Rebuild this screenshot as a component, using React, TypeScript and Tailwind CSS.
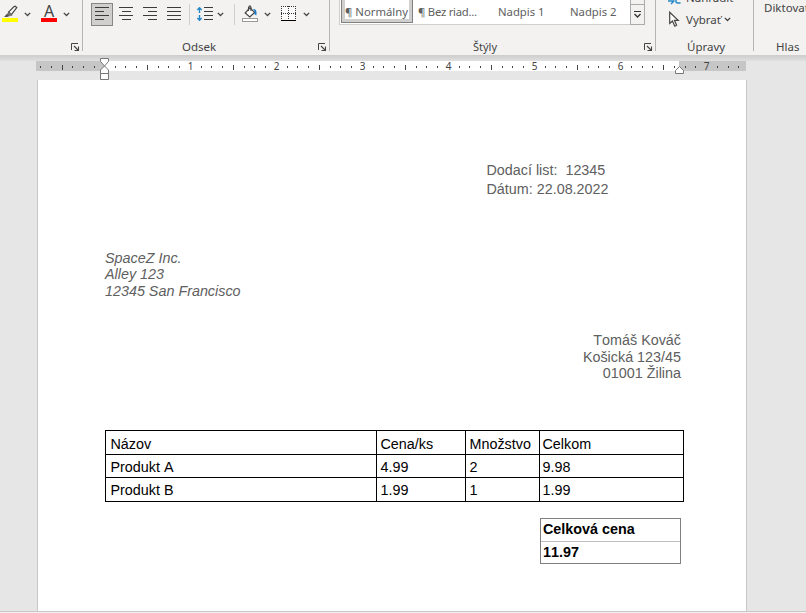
import React from 'react';

function Chevron({ className = '' }: { className?: string }) {
  return (
    <svg width="7" height="5" viewBox="0 0 7 5" className={`shrink-0 ${className}`}>
      <path d="M0.8 0.9 L3.5 3.5 L6.2 0.9" fill="none" stroke="#444" strokeWidth="1.3" />
    </svg>
  );
}

function Launcher({ className = '' }: { className?: string }) {
  return (
    <svg width="9" height="9" viewBox="0 0 9 9" className={`absolute top-[43px] ${className}`}>
      <path d="M0.5 7 V0.5 H7" fill="none" stroke="#444" />
      <path d="M3 3 L7 7 M7.5 3.5 V7.5 H3.5" fill="none" stroke="#444" strokeWidth="1.1" />
    </svg>
  );
}

function AlignIcon({ lines }: { lines: [number, number][] }) {
  return (
    <svg width="14" height="14" viewBox="0 0 14 14" className="shrink-0" shapeRendering="crispEdges">
      {lines.map(([x, w], i) => (
        <rect key={i} x={x} y={i * 4} width={w} height="1" fill="#3b3b3b" />
      ))}
    </svg>
  );
}

function Group({ className = '', children, label, labelClass = '' }: {
  className?: string; children?: React.ReactNode; label?: string; labelClass?: string;
}) {
  return (
    <section className={`relative flex h-[55px] shrink-0 flex-col ${className}`}>
      <div className="flex h-[38px] items-start">{children}</div>
      <div className={`h-[17px] text-[11.5px] leading-[18px] whitespace-nowrap ${labelClass}`}>{label}</div>
    </section>
  );
}

function Divider() {
  return <div className="h-[51px] w-px shrink-0 bg-[#b5b4b3]" />;
}

function Ribbon() {
  return (
    <header className="flex h-[55px] overflow-hidden bg-[#f3f2f1] font-['Noto_Sans','Open_Sans',sans-serif] text-[#444]">
      <Group className="w-[82px]">
        <svg width="17" height="17" viewBox="0 0 17 17" className="mt-[5px] ml-[2px]">
          <rect x="0" y="13" width="16" height="4" fill="#ff0" />
          <path d="M13.2 1.2 L14.8 2.6 L9.3 9.6 L6.6 7.2 L11.8 1.8 Z" fill="#fafafa" stroke="#444" strokeWidth="1.2" />
          <path d="M6.5 6.5 L10.2 10 L7.5 10.8 L5.8 9.5 Z" fill="#777" stroke="#555" strokeWidth="0.6" />
          <path d="M5.2 8.6 L7.5 10.9 L5.3 12 L2 12 Z" fill="#555" />
        </svg>
        <Chevron className="mt-[12px] ml-[5px]" />
        <div className="mt-[2px] ml-[10px] flex w-4 flex-col items-center">
          <span className="h-4 text-[16px] leading-[19px] font-normal">A</span>
          <span className="h-1 w-4 bg-[#f00]" />
        </div>
        <Chevron className="mt-[12px] ml-[6px]" />
        <Launcher className="left-[71px]" />
      </Group>
      <Divider />
      <Group className="w-[246px]" label="Odsek" labelClass="pl-[99px] text-[11.4px]">
        <div className="mt-[3px] ml-[8px] flex h-[23px] w-[22px] shrink-0 border border-[#878685] bg-[#d0cfce] pt-[3px] pl-[3px]">
          <AlignIcon lines={[[0, 14], [0, 9], [0, 14], [0, 9]]} />
        </div>
        <div className="mt-[7px] ml-[6px] flex gap-[10px]">
          <AlignIcon lines={[[0, 14], [3, 9], [0, 14], [3, 9]]} />
          <AlignIcon lines={[[0, 14], [5, 9], [0, 14], [5, 9]]} />
          <AlignIcon lines={[[0, 14], [0, 14], [0, 14], [0, 14]]} />
        </div>
        <div className="mt-[4px] ml-[8px] h-[21px] w-px bg-[#d0cfce]" />
        <svg width="17" height="15" viewBox="0 0 17 15" className="mt-[7px] ml-[7px]">
          <path d="M2.5 0.5 V6 M0.3 2.9 L2.5 0.7 L4.7 2.9 M2.5 8 V13.5 M0.3 11.1 L2.5 13.3 L4.7 11.1" fill="none" stroke="#2488c8" strokeWidth="1.4" />
          <path d="M7 0.5 H16 M7 4.5 H16 M7 8.5 H16 M7 12.5 H16" stroke="#3b3b3b" />
        </svg>
        <Chevron className="mt-[12px] ml-[3px]" />
        <div className="mt-[4px] ml-[10px] h-[21px] w-px bg-[#d0cfce]" />
        <svg width="17" height="17" viewBox="0 0 17 17" className="mt-[5px] ml-[7px]">
          <path d="M7.8 2.8 L12.6 7.4 L7.8 12 L3.2 8 Z" fill="#fff" stroke="#444" strokeWidth="1.2" />
          <path d="M6.5 6 V2.5 Q8 -0.8 9 2.5 V6" fill="none" stroke="#444" strokeWidth="1.1" />
          <path d="M11 4 Q15.5 4 14.3 10.5 L12.3 9 Q13.5 6.5 11 4 Z" fill="#1979ca" />
          <rect x="0.5" y="13.5" width="15" height="3" fill="#fff" stroke="#999" />
        </svg>
        <Chevron className="mt-[12px] ml-[5px]" />
        <svg width="16" height="16" viewBox="0 0 16 16" className="mt-[5px] ml-[10px]">
          <rect x="0" y="1" width="15" height="14" fill="#fafafa" />
          <path d="M0 1.5 H15 M0 8.5 H15" stroke="#333" strokeDasharray="1 1" />
          <path d="M0.5 1 V14 M7.5 1 V14 M14.5 1 V14" stroke="#333" strokeDasharray="1 1" />
          <path d="M0 15.5 H15" stroke="#000" />
        </svg>
        <Chevron className="mt-[12px] ml-[6px]" />
        <Launcher className="left-[235px]" />
      </Group>
      <Divider />
      <Group className="w-[325px]" label="Štýly" labelClass="pl-[143px] text-[11px]">
        <div className="ml-[9px] flex h-[25px] w-[291px] shrink-0 border-b border-l border-[#cfcecd] bg-white text-[#606060]">
          <div className="ml-px h-[23px] w-[72px] shrink-0 border border-t-0 border-[#808180] bg-[#d0cfce] px-[3px] pb-[3px]">
            <div className="h-[19px] bg-white text-[11.3px] leading-[24px] whitespace-nowrap">¶ Normálny</div>
          </div>
          <span className="mt-[3px] ml-[5px] w-[80px] shrink-0 text-[11.3px] leading-[18px] tracking-[-0.25px] whitespace-nowrap">¶ Bez riad...</span>
          <span className="mt-[3px] w-[72px] shrink-0 text-[11.3px] leading-[18px] whitespace-nowrap">Nadpis 1</span>
          <span className="mt-[3px] w-[60px] shrink-0 text-[11.3px] leading-[18px] whitespace-nowrap">Nadpis 2</span>
        </div>
        <div className="flex h-[25px] w-[15px] shrink-0 flex-col border border-t-0 border-[#acabaa] bg-[#f3f2f1]">
          <div className="h-[5px] shrink-0 border-b border-[#acabaa]" />
          <svg width="13" height="17" viewBox="0 0 13 17" className="shrink-0">
            <path d="M3 6.5 H10" stroke="#333" />
            <path d="M3.5 9 L6.5 12 L9.5 9" fill="none" stroke="#333" strokeWidth="1.3" />
          </svg>
        </div>
        <Launcher className="left-[314px]" />
      </Group>
      <Divider />
      <Group className="w-[97px]" label="Úpravy" labelClass="pl-[31px] text-[11.1px]">
        <div className="flex flex-col">
          <div className="flex h-[10px]">
            <svg width="14" height="5" viewBox="0 0 14 5" className="ml-[12px]">
              <path d="M0 1 H6 M3 4 L6.5 0.5 M8 0 V1.5 Q8 3 10 3 H12.5" fill="none" stroke="#2488c8" strokeWidth="1.4" />
            </svg>
            <span className="-mt-[11px] ml-[4px] text-[11.5px] leading-[17px]">Nahradiť</span>
          </div>
          <div className="flex h-[20px]">
            <svg width="12" height="17" viewBox="0 0 12 17" className="mt-[1px] ml-[13px]">
              <path d="M0.7 1.2 V12.5 L3.5 10 L5.8 15.2 L7.6 14.2 L5.5 9.3 H9.2 Z" fill="#fff" stroke="#444" strokeWidth="1.2" />
            </svg>
            <span className="ml-[5px] w-[36px] text-[11.5px] leading-[20px]">Vybrať</span>
            <Chevron className="mt-[7px] ml-[2px]" />
          </div>
        </div>
      </Group>
      <Divider />
      <Group className="w-[52px]" label="Hlas" labelClass="pl-[22px] text-[11.2px]">
        <span className="ml-[10px] text-[11.5px] leading-[16px] whitespace-nowrap">Diktovať</span>
      </Group>
    </header>
  );
}

function Ruler() {
  const ticks = Array.from({ length: 66 }, (_, i) => i - 6).filter((i) => i !== 0 && i < 60);
  return (
    <svg width="806" height="25" viewBox="0 0 806 25" className="block shrink-0">
      <defs>
        <linearGradient id="edge" x1="0" y1="0" x2="0" y2="1">
          <stop offset="0" stopColor="#cdcccb" />
          <stop offset="1" stopColor="#e0e0e0" />
        </linearGradient>
      </defs>
      <rect x="0" y="0" width="806" height="6" fill="url(#edge)" />
      <rect x="36" y="6" width="710" height="10" fill="#fff" />
      <rect x="36" y="6" width="68" height="10" fill="#c6c6c6" />
      <rect x="679" y="6" width="67" height="10" fill="#c6c6c6" />
      {ticks.map((i) => {
        const x = Math.floor((i < 0 ? 105.25 : 104.25) + i * 10.755);
        if (i % 8 === 0) {
          return (
            <text key={i} x={x + 0.5} y="15" textAnchor="middle" fill="#444" className="font-['Noto_Sans',sans-serif] text-[10px]">
              {i / 8}
            </text>
          );
        }
        return i % 4 === 0
          ? <rect key={i} x={x} y="10" width="1" height="5" fill="#444" />
          : <rect key={i} x={x} y="11" width="1" height="2" fill="#444" />;
      })}
      <path d="M100.5 3.5 H108.5 V6.5 L104.5 11 L100.5 6.5 Z" fill="#fff" stroke="#777" />
      <path d="M104.5 11 L108.5 15 V24.5 H100.5 V15 Z M100.5 18.5 H108.5" fill="#fff" stroke="#777" />
      <path d="M679.5 11.5 L683.5 15.5 V18.5 H675.5 V15.5 Z" fill="#fff" stroke="#777" />
    </svg>
  );
}

const rows = [
  ['Názov', 'Cena/ks', 'Množstvo', 'Celkom'],
  ['Produkt A', '4.99', '2', '9.98'],
  ['Produkt B', '1.99', '1', '1.99'],
];
const rowStyles = ['h-[24px] leading-[26px]', 'h-[23px] leading-[24px]', 'h-[24px] leading-[24px]'];
const cellWidths = ['w-[271px] pl-[4.5px]', 'w-[89px] pl-[3.5px]', 'w-[74px] pl-[3.5px]', 'w-[144px] pl-[2.5px]'];

function Page() {
  return (
    <main className="ml-[37px] flex h-[531px] w-[710px] shrink-0 flex-col border-x border-[#c6c6c6] bg-white pl-[67px] font-['Liberation_Sans',Arial,sans-serif] text-[14.35px] text-[#606060] [font-kerning:none]">
      <div className="mt-[81px] ml-[381.5px] h-[38px] leading-[19px] whitespace-pre">
        <p>{'Dodací list:  12345'}</p>
        <p>Dátum: 22.08.2022</p>
      </div>
      <address className="mt-[51px] h-[50px] leading-[17px] italic">
        <p className="h-[16px]">SpaceZ Inc.</p>
        <p>Alley 123</p>
        <p>12345 San Francisco</p>
      </address>
      <address className="mt-[32px] h-[50px] w-[576px] text-right leading-[16.5px] not-italic">
        <p>Tomáš Kováč</p>
        <p>Košická 123/45</p>
        <p>01001 Žilina</p>
      </address>
      <div className="mt-[48px] w-[579px] border-t border-l border-black text-black">
        {rows.map((row, r) => (
          <div key={r} className={`flex ${rowStyles[r]}`}>
            {row.map((cell, c) => (
              <div key={c} className={`border-r border-b border-black ${cellWidths[c]}`}>{cell}</div>
            ))}
          </div>
        ))}
      </div>
      <div className="mt-[16px] ml-[435px] h-[46px] w-[141px] border border-[#808080] font-bold text-black">
        <div className="h-[23px] border-b border-[#c0c0c0] pl-[2px] leading-[21px]">Celková cena</div>
        <div className="pl-[2px] leading-[21px]">11.97</div>
      </div>
    </main>
  );
}

export default function App() {
  return (
    <div className="flex h-[613px] w-[806px] flex-col overflow-hidden bg-[#e6e6e6]">
      <Ribbon />
      <Ruler />
      <Page />
      <footer className="h-[2px] shrink-0 border-t border-[#c6c6c6] bg-[#f3f2f1]" />
    </div>
  );
}
